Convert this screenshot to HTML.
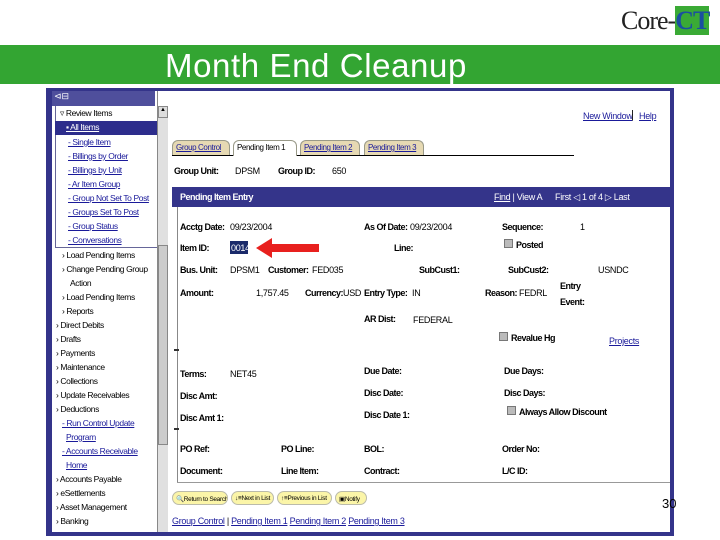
<!DOCTYPE html>
<html><head><meta charset="utf-8"><style>
*{margin:0;padding:0;box-sizing:border-box}
body{width:720px;height:540px;background:#fff;position:relative;overflow:hidden;font-family:"Liberation Sans",sans-serif}
.a{position:absolute;white-space:nowrap}
.s{font-size:9px;color:#000;letter-spacing:-0.3px}
.b{font-weight:bold;letter-spacing:-0.5px}
.l{color:#1a1a9a;text-decoration:underline}
.nav div{position:absolute;font-size:8.5px;white-space:nowrap;letter-spacing:-0.4px}
.tab{position:absolute;top:140px;height:15px;border:1px solid #998;border-bottom:none;border-radius:6px 6px 0 0;background:#e6d9b3;font-size:8px;padding:2px 3px;color:#1a1a9a;text-decoration:underline;letter-spacing:-0.4px;white-space:nowrap;overflow:hidden}
.btn{position:absolute;top:491px;height:14px;border:1px solid #bba;border-radius:7px;background:#fbf5a8;font-size:6.5px;padding:3px 3px;letter-spacing:-0.3px;white-space:nowrap;overflow:hidden}
.cb{position:absolute;width:9px;height:9px;background:#bbb;border:1px solid #777}
</style></head><body>
<div class="a" style="left:621px;top:6px;font-family:'Liberation Serif',serif;font-size:26px;color:#222;letter-spacing:-1px">Core-<span style="color:#1a4fa0;font-weight:bold;background:#3aaa35">CT</span></div>
<div class="a" style="left:0;top:45px;width:720px;height:39px;background:#33a532"></div>
<div class="a" style="left:165px;top:47px;font-size:33px;color:#fff;letter-spacing:0.6px">Month End Cleanup</div>
<!-- frame -->
<div class="a" style="left:46px;top:88px;width:628px;height:448px;background:#34348a"></div>
<div class="a" style="left:52px;top:91px;width:618px;height:441px;background:#fff"></div>
<div class="a" style="left:52px;top:91px;width:103px;height:15px;background:#4f4f9c"></div>
<div class="a" style="left:54px;top:91px;font-size:9px;color:#fff">⊲⊟</div>
<!-- nav -->
<div class="a" style="left:55px;top:106px;width:1px;height:142px;background:#669"></div>
<div class="a" style="left:55px;top:247px;width:102px;height:1px;background:#669"></div>
<div class="a" style="left:55px;top:121px;width:102px;height:14px;background:#2d2d8c"></div>
<div class="nav">
<div style="left:60px;top:108px">▿ Review Items</div>
<div style="left:66px;top:122px;color:#fff;text-decoration:underline">▪ All Items</div>
<div style="left:68px;top:137px" class="l">- Single Item</div>
<div style="left:68px;top:151px" class="l">- Billings by Order</div>
<div style="left:68px;top:165px" class="l">- Billings by Unit</div>
<div style="left:68px;top:179px" class="l">- Ar Item Group</div>
<div style="left:68px;top:193px" class="l">- Group Not Set To Post</div>
<div style="left:68px;top:207px" class="l">- Groups Set To Post</div>
<div style="left:68px;top:221px" class="l">- Group Status</div>
<div style="left:68px;top:235px" class="l">- Conversations</div>
<div style="left:62px;top:250px">› Load Pending Items</div>
<div style="left:62px;top:264px">› Change Pending Group</div>
<div style="left:70px;top:278px">Action</div>
<div style="left:62px;top:292px">› Load Pending Items</div>
<div style="left:62px;top:306px">› Reports</div>
<div style="left:56px;top:320px">› Direct Debits</div>
<div style="left:56px;top:334px">› Drafts</div>
<div style="left:56px;top:348px">› Payments</div>
<div style="left:56px;top:362px">› Maintenance</div>
<div style="left:56px;top:376px">› Collections</div>
<div style="left:56px;top:390px">› Update Receivables</div>
<div style="left:56px;top:404px">› Deductions</div>
<div style="left:62px;top:418px" class="l">- Run Control Update</div>
<div style="left:66px;top:432px" class="l">Program</div>
<div style="left:62px;top:446px" class="l">- Accounts Receivable</div>
<div style="left:66px;top:460px" class="l">Home</div>
<div style="left:56px;top:474px">› Accounts Payable</div>
<div style="left:56px;top:488px">› eSettlements</div>
<div style="left:56px;top:502px">› Asset Management</div>
<div style="left:56px;top:516px">› Banking</div>
</div>
<!-- scrollbar -->
<div class="a" style="left:157px;top:91px;width:1px;height:441px;background:#888"></div>
<div class="a" style="left:158px;top:106px;width:10px;height:426px;background:#e0e0e0"></div>
<div class="a" style="left:158px;top:106px;width:10px;height:12px;background:#ddd;border:1px solid #888;font-size:6px;text-align:center">▲</div>
<div class="a" style="left:158px;top:245px;width:10px;height:200px;background:#ccc;border:1px solid #888"></div>
<!-- top links -->
<div class="a s l" style="left:583px;top:111px">New Window</div>
<div class="a s" style="left:631px;top:109px;font-size:11px">|</div>
<div class="a s l" style="left:639px;top:111px">Help</div>
<!-- tabs -->
<div class="a" style="left:172px;top:155px;width:402px;height:1px;background:#000"></div>
<div class="tab" style="left:172px;width:58px">Group Control</div>
<div class="tab" style="left:233px;width:64px;background:#fff;color:#000;text-decoration:none;height:16px">Pending Item 1</div>
<div class="tab" style="left:300px;width:60px">Pending Item 2</div>
<div class="tab" style="left:364px;width:60px">Pending Item 3</div>
<div class="a s b" style="left:174px;top:166px">Group Unit:</div>
<div class="a s" style="left:235px;top:166px">DPSM</div>
<div class="a s b" style="left:278px;top:166px">Group ID:</div>
<div class="a s" style="left:332px;top:166px">650</div>
<!-- header bar -->
<div class="a" style="left:172px;top:187px;width:498px;height:20px;background:#34348a"></div>
<div class="a s b" style="left:180px;top:192px;color:#fff">Pending Item Entry</div>
<div class="a s" style="left:494px;top:192px;color:#fff"><u>Find</u> | View A</div>
<div class="a s" style="left:555px;top:192px;color:#fff">First ◁ 1 of 4 ▷ Last</div>
<div class="a" style="left:177px;top:207px;width:1px;height:276px;background:#888"></div>
<div class="a" style="left:177px;top:482px;width:493px;height:1px;background:#999"></div>
<!-- fields -->
<div class="a s b" style="left:180px;top:222px">Acctg Date:</div><div class="a s" style="left:230px;top:222px">09/23/2004</div>
<div class="a s b" style="left:364px;top:222px">As Of Date:</div><div class="a s" style="left:410px;top:222px">09/23/2004</div>
<div class="a s b" style="left:502px;top:222px">Sequence:</div><div class="a s" style="left:580px;top:222px">1</div>
<div class="a s b" style="left:180px;top:243px">Item ID:</div>
<div class="a" style="left:230px;top:241px;width:18px;height:13px;background:#1a2a6a"></div>
<div class="a s" style="left:231px;top:243px;color:#fff">0014</div>
<svg class="a" style="left:256px;top:238px" width="64" height="20"><polygon points="0,10 16,0 16,6 63,6 63,14 16,14 16,20" fill="#e8201e"/></svg>
<div class="a s b" style="left:394px;top:243px">Line:</div>
<div class="cb" style="left:504px;top:239px"></div><div class="a s b" style="left:516px;top:240px">Posted</div>
<div class="a s b" style="left:180px;top:265px">Bus. Unit:</div><div class="a s" style="left:230px;top:265px">DPSM1</div>
<div class="a s b" style="left:268px;top:265px">Customer:</div><div class="a s" style="left:312px;top:265px">FED035</div>
<div class="a s b" style="left:419px;top:265px">SubCust1:</div>
<div class="a s b" style="left:508px;top:265px">SubCust2:</div><div class="a s" style="left:598px;top:265px">USNDC</div>
<div class="a s b" style="left:180px;top:288px">Amount:</div><div class="a s" style="left:256px;top:288px">1,757.45</div>
<div class="a s b" style="left:305px;top:288px">Currency:</div><div class="a s" style="left:343px;top:288px">USD</div>
<div class="a s b" style="left:364px;top:288px">Entry Type:</div><div class="a s" style="left:412px;top:288px">IN</div>
<div class="a s b" style="left:485px;top:288px">Reason:</div><div class="a s" style="left:519px;top:288px">FEDRL</div>
<div class="a s b" style="left:560px;top:281px">Entry</div><div class="a s b" style="left:560px;top:297px">Event:</div>
<div class="a s b" style="left:364px;top:314px">AR Dist:</div><div class="a s" style="left:413px;top:315px">FEDERAL</div>
<div class="cb" style="left:499px;top:332px"></div><div class="a s b" style="left:511px;top:333px">Revalue Hg</div>
<div class="a s l" style="left:609px;top:336px">Projects</div>
<div class="a" style="left:174px;top:349px;width:5px;height:2px;background:#333"></div>
<div class="a s b" style="left:180px;top:369px">Terms:</div><div class="a s" style="left:230px;top:369px">NET45</div>
<div class="a s b" style="left:364px;top:366px">Due Date:</div><div class="a s b" style="left:504px;top:366px">Due Days:</div>
<div class="a s b" style="left:180px;top:391px">Disc Amt:</div>
<div class="a s b" style="left:364px;top:388px">Disc Date:</div><div class="a s b" style="left:504px;top:388px">Disc Days:</div>
<div class="cb" style="left:507px;top:406px"></div><div class="a s b" style="left:519px;top:407px">Always Allow Discount</div>
<div class="a s b" style="left:180px;top:413px">Disc Amt 1:</div><div class="a s b" style="left:364px;top:410px">Disc Date 1:</div>
<div class="a" style="left:174px;top:428px;width:5px;height:2px;background:#333"></div>
<div class="a s b" style="left:180px;top:444px">PO Ref:</div><div class="a s b" style="left:281px;top:444px">PO Line:</div>
<div class="a s b" style="left:364px;top:444px">BOL:</div><div class="a s b" style="left:502px;top:444px">Order No:</div>
<div class="a s b" style="left:180px;top:466px">Document:</div><div class="a s b" style="left:281px;top:466px">Line Item:</div>
<div class="a s b" style="left:364px;top:466px">Contract:</div><div class="a s b" style="left:502px;top:466px">L/C ID:</div>
<!-- buttons -->
<div class="btn" style="left:172px;width:56px">🔍Return to Search</div>
<div class="btn" style="left:231px;width:43px">↓≡Next in List</div>
<div class="btn" style="left:277px;width:55px">↑≡Previous in List</div>
<div class="btn" style="left:335px;width:32px">▣Notify</div>
<div class="a s" style="left:172px;top:516px"><span class="l">Group Control</span> | <span class="l">Pending Item 1</span> <span class="l">Pending Item 2</span> <span class="l">Pending Item 3</span></div>
<div class="a" style="left:662px;top:496px;font-size:13px;color:#000">30</div>
</body></html>
